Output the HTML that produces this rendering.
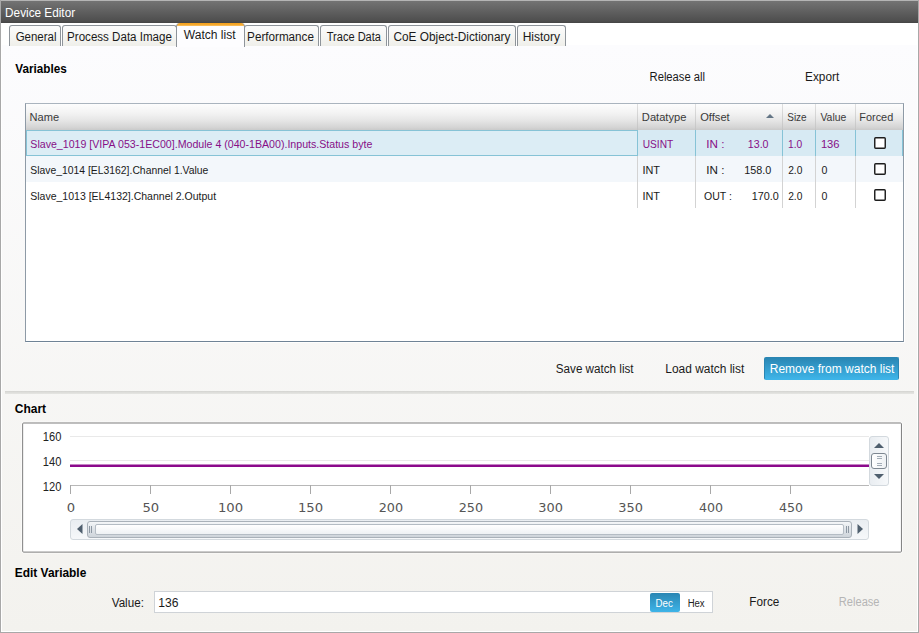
<!DOCTYPE html>
<html><head><meta charset="utf-8"><title>Device Editor</title>
<style>
html,body{margin:0;padding:0;}
body{width:919px;height:633px;overflow:hidden;background:#f4f3ef;font-family:"Liberation Sans",sans-serif;}
#win{position:relative;width:919px;height:633px;overflow:hidden;background:#fff;}
#win div,#win svg{position:absolute;box-sizing:border-box;}
.t{position:absolute;white-space:pre;line-height:16px;transform-origin:0 50%;font-family:"Liberation Sans",sans-serif;}
#panel{left:2px;top:45px;width:915px;height:586px;background:linear-gradient(#fcfcfe,#f3f2ee);}
#bl{left:0;top:0;width:1px;height:633px;background:#a8a8a8;}
#br{left:918px;top:0;width:1px;height:633px;background:#a8a8a8;}
#bb{left:0;top:632px;width:919px;height:1px;background:#a8a8a8;}
#title{left:1px;top:1px;width:917px;height:22px;background:linear-gradient(#737373 0,#4e4e4e 20px,#444 22px);}
#bt{left:0;top:0;width:919px;height:1px;background:#b4b4b4;}
.tab{top:25px;height:21px;border:1px solid #8e949a;border-bottom:none;border-radius:3px 3px 0 0;background:linear-gradient(#fcfcfc,#efefea);}
.tab.sel{top:23px;height:24px;border-color:#8e949a;border-top:none;background:linear-gradient(#f5a01a 0,#f6ab32 2px,#f9c774 3px,#fdfdff 3px);border-radius:4px 4px 0 0;}
#list{left:25px;top:103px;width:879px;height:239px;border:1px solid #8e9aa6;border-top-color:#aab4be;border-bottom-color:#6f8396;background:#fff;box-shadow:1px 1px 0 rgba(255,255,255,.85);}
#hdr{left:26px;top:104px;width:877px;height:26px;background:linear-gradient(#fdfdfd 0,#f3f3f3 35%,#e5e5e5 65%,#d4d4d4 90%,#cacaca 100%);}
.hs{top:104px;width:1px;height:26px;background:linear-gradient(#e0e0e0,#c4c4c4);}
.cs{top:130px;width:1px;height:78px;background:#d3d3d3;}
#r1{left:26px;top:130px;width:877px;height:26px;background:#d7eaf3;}
#r1n{left:26px;top:130px;width:612px;height:26px;border:1px solid #86c3d6;background:#dcedf5;}
.cs1{top:130px;width:1px;height:26px;background:#86c3d6;}
#r2{left:26px;top:156px;width:877px;height:26px;background:#f3f7fb;}
#btn{left:764px;top:357px;width:135px;height:23px;border-radius:2px;background:linear-gradient(#2a86b3,#3eb4e8);border:1px solid #2a86b3;border-bottom-color:#3eb4e8}
.sep{left:5px;width:909px;height:3px;background:linear-gradient(#d3d3d0,#dededb 50%,#e6e6e3);}
.gl{left:70px;width:799px;height:1px;background:#e9e9e9;}
#ax{left:70px;top:485px;width:799px;height:1px;background:#b8b8b8;}
.tk{top:485px;width:1px;height:9px;background:#a8a8a8;}

#vsb{left:869px;top:436px;width:20px;height:50px;border:1px solid #d3d9de;border-radius:3px;background:linear-gradient(90deg,#e9edf1,#f6f8fa);}
#vth{left:871px;top:453px;width:16px;height:16px;border:1px solid #7d8791;border-radius:3px;background:linear-gradient(90deg,#fff,#eef1f4);}
#hsb{left:70px;top:519px;width:799px;height:21px;border:1px solid #d3d9de;border-radius:3px;background:linear-gradient(#e9edf1,#f6f8fa);}
#hth{left:87px;top:521px;width:765px;height:17px;border:1px solid #a9b1b9;border-radius:3px;background:linear-gradient(#f4f6f8,#dde2e7 50%,#cfd5db);}
#hin{left:95px;top:524px;width:749px;height:11px;border:1px solid #b4bcc4;border-radius:2px;background:linear-gradient(#fff,#eef1f4);}
#inp{left:154px;top:591px;width:559px;height:22px;border:1px solid #cfd3d7;background:#fff;}
#dec{left:650px;top:593px;width:30px;height:19px;border-radius:2px;background:linear-gradient(#2a86b3,#3eb4e8);}

</style></head>
<body>
<div id="win">
<div id="panel"></div>
<div id="title"></div>
<div id="bt"></div><div id="bl"></div><div id="br"></div><div id="bb"></div>
<div class="tab" style="left:9px;width:52px"></div>
<div class="tab" style="left:62px;width:115px"></div>
<div class="tab" style="left:244px;width:75px"></div>
<div class="tab" style="left:320px;width:67px"></div>
<div class="tab" style="left:388px;width:128px"></div>
<div class="tab" style="left:517px;width:49px"></div>
<div class="tab sel" style="left:176px;width:69px"></div>
<div id="list"></div>
<div id="hdr"></div>
<div class="hs" style="left:637px"></div><div class="hs" style="left:695px"></div><div class="hs" style="left:782px"></div><div class="hs" style="left:815px"></div><div class="hs" style="left:855px"></div>
<div id="r1"></div><div id="r2"></div>
<div class="cs" style="left:637px"></div><div class="cs" style="left:695px"></div><div class="cs" style="left:782px"></div><div class="cs" style="left:815px"></div><div class="cs" style="left:855px"></div>
<div class="cs1" style="left:695px"></div><div class="cs1" style="left:782px"></div><div class="cs1" style="left:815px"></div><div class="cs1" style="left:855px"></div><div class="cs1" style="left:902px"></div>
<div id="r1n"></div>
<svg style="left:766px;top:114px" width="8" height="4" viewBox="0 0 8 4"><path d="M0 4 L4 0 L8 4 Z" fill="#647686"/></svg>
<svg style="left:874px;top:137px" width="12" height="12" viewBox="0 0 12 12"><rect x=".75" y=".75" width="10.5" height="10.5" rx="0.9" fill="#fff" stroke="#1e1e1e" stroke-width="1.45"/></svg>
<svg style="left:874px;top:163px" width="12" height="12" viewBox="0 0 12 12"><rect x=".75" y=".75" width="10.5" height="10.5" rx="0.9" fill="#fff" stroke="#1e1e1e" stroke-width="1.45"/></svg>
<svg style="left:874px;top:189px" width="12" height="12" viewBox="0 0 12 12"><rect x=".75" y=".75" width="10.5" height="10.5" rx="0.9" fill="#fff" stroke="#1e1e1e" stroke-width="1.45"/></svg>
<div id="btn"></div>
<div class="sep" style="top:391px"></div>
<svg id="chart" style="left:20px;top:420px" width="886" height="136" viewBox="0 0 886 136"><rect x="1.65" y="2.0" width="880.8" height="131.1" rx="2" fill="none" stroke="#fff" stroke-opacity=".6" stroke-width="1"/><rect x="2.65" y="3.0" width="878.8" height="129.1" rx="1" fill="#fff" stroke="#7e7e7e" stroke-width="1"/></svg>
<div class="gl" style="top:436px"></div>
<div class="gl" style="top:460px"></div>
<div id="ax"></div>
<div class="tk" style="left:70px"></div><div class="tk" style="left:150px"></div><div class="tk" style="left:230px"></div><div class="tk" style="left:310px"></div><div class="tk" style="left:390px"></div><div class="tk" style="left:470px"></div><div class="tk" style="left:550px"></div><div class="tk" style="left:630px"></div><div class="tk" style="left:710px"></div><div class="tk" style="left:790px"></div>
<svg style="left:70px;top:462px" width="799" height="8" viewBox="0 0 799 8"><path d="M0 3.7H799" stroke="#8b0a8b" stroke-width="2.4" fill="none"/></svg>
<div id="vsb"></div>
<svg style="left:874px;top:443px" width="10" height="5" viewBox="0 0 10 5"><path d="M0 5 L5 0 L10 5 Z" fill="#4f5f6e"/></svg>
<svg style="left:874px;top:474px" width="10" height="5" viewBox="0 0 10 5"><path d="M0 0 L5 5 L10 0 Z" fill="#4f5f6e"/></svg>
<div id="vth"></div>
<svg style="left:877px;top:456px" width="5" height="11" viewBox="0 0 5 11"><path d="M0 0.5h5M0 2.5h5M0 7.5h5M0 9.5h5" stroke="#a3adb7" stroke-width="1" fill="none"/></svg>
<div id="hsb"></div>
<svg style="left:77px;top:524px" width="6" height="10" viewBox="0 0 6 10"><path d="M5.5 0 L0 5 L5.5 10 Z" fill="#4f5f6e"/></svg>
<svg style="left:857px;top:524px" width="6" height="10" viewBox="0 0 6 10"><path d="M0.5 0 L6 5 L0.5 10 Z" fill="#4f5f6e"/></svg>
<div id="hth"></div><div id="hin"></div>
<svg style="left:89px;top:526px" width="4" height="7" viewBox="0 0 4 7"><path d="M0.5 0v7M2.5 0v7" stroke="#8d98a3" stroke-width="1"/></svg>
<svg style="left:846px;top:526px" width="4" height="7" viewBox="0 0 4 7"><path d="M0.5 0v7M2.5 0v7" stroke="#8d98a3" stroke-width="1"/></svg>
<div id="inp"></div><div id="dec"></div>

<span class="t" style="left:5px;top:4.67px;font-size:12.5px;color:#ffffff;transform:translateX(0.12px) scaleX(0.9413);">Device Editor</span>
<span class="t" style="left:15px;top:28.84px;font-size:12px;color:#1a1a1a;transform:translateX(0.64px) scaleX(0.9574);">General</span>
<span class="t" style="left:67px;top:28.84px;font-size:12px;color:#1a1a1a;transform:translateX(0.08px) scaleX(0.9644);">Process Data Image</span>
<span class="t" style="left:183px;top:26.84px;font-size:12px;color:#1a1a1a;transform:translateX(0.78px) scaleX(1.0047);">Watch list</span>
<span class="t" style="left:247px;top:28.84px;font-size:12px;color:#1a1a1a;transform:translateX(0.12px) scaleX(0.9726);">Performance</span>
<span class="t" style="left:326px;top:28.84px;font-size:12px;color:#1a1a1a;transform:translateX(0.72px) scaleX(0.9210);">Trace Data</span>
<span class="t" style="left:393px;top:28.84px;font-size:12px;color:#1a1a1a;transform:translateX(0.51px) scaleX(0.9839);">CoE Object-Dictionary</span>
<span class="t" style="left:522px;top:28.84px;font-size:12px;color:#1a1a1a;transform:translateX(0.65px) scaleX(1.0019);">History</span>
<span class="t" style="left:15px;top:60.84px;font-size:12px;color:#000;transform:translateX(0.36px) scaleX(0.9751);font-weight:bold;">Variables</span>
<span class="t" style="left:649px;top:68.84px;font-size:12px;color:#1a1a1a;transform:translateX(0.51px) scaleX(0.9365);">Release all</span>
<span class="t" style="left:805px;top:68.84px;font-size:12px;color:#1a1a1a;transform:translateX(0.12px) scaleX(0.9820);">Export</span>
<span class="t" style="left:29px;top:109.19px;font-size:11px;color:#3a3a3a;transform:translateX(0.54px) scaleX(1.0054);">Name</span>
<span class="t" style="left:641px;top:109.19px;font-size:11px;color:#3a3a3a;transform:translateX(0.85px) scaleX(1.0116);">Datatype</span>
<span class="t" style="left:700px;top:109.19px;font-size:11px;color:#3a3a3a;transform:translateX(0.20px) scaleX(1.0111);">Offset</span>
<span class="t" style="left:787px;top:109.19px;font-size:11px;color:#3a3a3a;transform:translateX(0.25px) scaleX(0.9071);">Size</span>
<span class="t" style="left:820px;top:109.19px;font-size:11px;color:#3a3a3a;transform:translateX(0.45px) scaleX(0.9452);">Value</span>
<span class="t" style="left:859px;top:109.19px;font-size:11px;color:#3a3a3a;transform:translateX(0.32px) scaleX(0.9897);">Forced</span>
<span class="t" style="left:30px;top:135.79px;font-size:11px;color:#870f87;transform:translateX(0.32px) scaleX(0.9649);">Slave_1019 [VIPA 053-1EC00].Module 4 (040-1BA00).Inputs.Status byte</span>
<span class="t" style="left:30px;top:161.79px;font-size:11px;color:#1a1a1a;transform:translateX(0.26px) scaleX(0.9433);">Slave_1014 [EL3162].Channel 1.Value</span>
<span class="t" style="left:30px;top:187.79px;font-size:11px;color:#1a1a1a;transform:translateX(0.23px) scaleX(0.9556);">Slave_1013 [EL4132].Channel 2.Output</span>
<span class="t" style="left:642px;top:135.79px;font-size:11px;color:#870f87;transform:translateX(0.68px) scaleX(0.9242);">USINT</span>
<span class="t" style="left:642px;top:161.79px;font-size:11px;color:#1a1a1a;transform:translateX(0.44px) scaleX(0.9913);">INT</span>
<span class="t" style="left:642px;top:187.79px;font-size:11px;color:#1a1a1a;transform:translateX(0.44px) scaleX(0.9913);">INT</span>
<span class="t" style="left:706px;top:135.79px;font-size:11px;color:#870f87;transform:translateX(0.35px) scaleX(1.0586);">IN :</span>
<span class="t" style="left:747px;top:135.79px;font-size:11px;color:#870f87;transform:translateX(0.83px) scaleX(0.9661);">13.0</span>
<span class="t" style="left:706px;top:161.79px;font-size:11px;color:#1a1a1a;transform:translateX(0.35px) scaleX(1.0586);">IN :</span>
<span class="t" style="left:744px;top:161.79px;font-size:11px;color:#1a1a1a;transform:translateX(0.31px) scaleX(0.9835);">158.0</span>
<span class="t" style="left:704px;top:187.79px;font-size:11px;color:#1a1a1a;transform:translateX(0.01px) scaleX(0.9582);">OUT :</span>
<span class="t" style="left:751px;top:187.79px;font-size:11px;color:#1a1a1a;transform:translateX(0.84px) scaleX(0.9821);">170.0</span>
<span class="t" style="left:787px;top:135.79px;font-size:11px;color:#870f87;transform:translateX(1.00px) scaleX(0.9290);">1.0</span>
<span class="t" style="left:788px;top:161.79px;font-size:11px;color:#1a1a1a;transform:translateX(0.14px) scaleX(0.9297);">2.0</span>
<span class="t" style="left:788px;top:187.79px;font-size:11px;color:#1a1a1a;transform:translateX(0.14px) scaleX(0.9297);">2.0</span>
<span class="t" style="left:820px;top:135.79px;font-size:11px;color:#870f87;transform:translateX(0.90px) scaleX(1.0164);">136</span>
<span class="t" style="left:821px;top:161.79px;font-size:11px;color:#1a1a1a;transform:translateX(0.42px) scaleX(0.9627);">0</span>
<span class="t" style="left:821px;top:187.79px;font-size:11px;color:#1a1a1a;transform:translateX(0.42px) scaleX(0.9627);">0</span>
<span class="t" style="left:555px;top:360.84px;font-size:12px;color:#1a1a1a;transform:translateX(0.78px) scaleX(0.9722);">Save watch list</span>
<span class="t" style="left:665px;top:360.84px;font-size:12px;color:#1a1a1a;transform:translateX(0.28px) scaleX(0.9951);">Load watch list</span>
<span class="t" style="left:769px;top:360.84px;font-size:12px;color:#ffffff;transform:translateX(0.79px) scaleX(0.9994);">Remove from watch list</span>
<span class="t" style="left:14px;top:400.54px;font-size:12px;color:#000;transform:translateX(0.81px) scaleX(0.9982);font-weight:bold;">Chart</span>
<span class="t" style="left:42px;top:428.84px;font-size:12px;color:#222;transform:translateX(0.76px) scaleX(0.9267);">160</span>
<span class="t" style="left:42px;top:453.84px;font-size:12px;color:#222;transform:translateX(0.76px) scaleX(0.9267);">140</span>
<span class="t" style="left:42px;top:478.84px;font-size:12px;color:#222;transform:translateX(0.76px) scaleX(0.9267);">120</span>
<span class="t" style="left:66px;top:500.25px;font-size:12px;color:#555;transform:translateX(0.67px) scaleX(1.0962);font-family:'DejaVu Sans',sans-serif;">0</span>
<span class="t" style="left:142px;top:500.25px;font-size:12px;color:#555;transform:translateX(0.38px) scaleX(1.0968);font-family:'DejaVu Sans',sans-serif;">50</span>
<span class="t" style="left:217px;top:500.25px;font-size:12px;color:#555;transform:translateX(0.97px) scaleX(1.0982);font-family:'DejaVu Sans',sans-serif;">100</span>
<span class="t" style="left:297px;top:500.25px;font-size:12px;color:#555;transform:translateX(0.97px) scaleX(1.0986);font-family:'DejaVu Sans',sans-serif;">150</span>
<span class="t" style="left:378px;top:500.25px;font-size:12px;color:#555;transform:translateX(0.71px) scaleX(1.0644);font-family:'DejaVu Sans',sans-serif;">200</span>
<span class="t" style="left:458px;top:500.25px;font-size:12px;color:#555;transform:translateX(0.71px) scaleX(1.0644);font-family:'DejaVu Sans',sans-serif;">250</span>
<span class="t" style="left:538px;top:500.25px;font-size:12px;color:#555;transform:translateX(0.36px) scaleX(1.0753);font-family:'DejaVu Sans',sans-serif;">300</span>
<span class="t" style="left:618px;top:500.25px;font-size:12px;color:#555;transform:translateX(0.36px) scaleX(1.0753);font-family:'DejaVu Sans',sans-serif;">350</span>
<span class="t" style="left:698px;top:500.25px;font-size:12px;color:#555;transform:translateX(0.88px) scaleX(1.0520);font-family:'DejaVu Sans',sans-serif;">400</span>
<span class="t" style="left:778px;top:500.25px;font-size:12px;color:#555;transform:translateX(0.88px) scaleX(1.0520);font-family:'DejaVu Sans',sans-serif;">450</span>
<span class="t" style="left:14px;top:564.84px;font-size:12px;color:#000;transform:translateX(0.80px) scaleX(0.9925);font-weight:bold;">Edit Variable</span>
<span class="t" style="left:111px;top:594.84px;font-size:12px;color:#1a1a1a;transform:translateX(0.75px) scaleX(0.9693);">Value:</span>
<span class="t" style="left:158px;top:594.84px;font-size:12px;color:#1a1a1a;transform:translateX(0.19px) scaleX(1.0120);">136</span>
<span class="t" style="left:655px;top:595.53px;font-size:10px;color:#ffffff;transform:translateX(0.59px) scaleX(0.9697);">Dec</span>
<span class="t" style="left:687px;top:595.53px;font-size:10px;color:#222;transform:translateX(0.63px) scaleX(0.9551);">Hex</span>
<span class="t" style="left:749px;top:594.34px;font-size:12px;color:#1a1a1a;transform:translateX(0.32px) scaleX(0.9783);">Force</span>
<span class="t" style="left:838px;top:594.34px;font-size:12px;color:#b5b5b5;transform:translateX(0.84px) scaleX(0.9235);">Release</span>
</div>
</body></html>
